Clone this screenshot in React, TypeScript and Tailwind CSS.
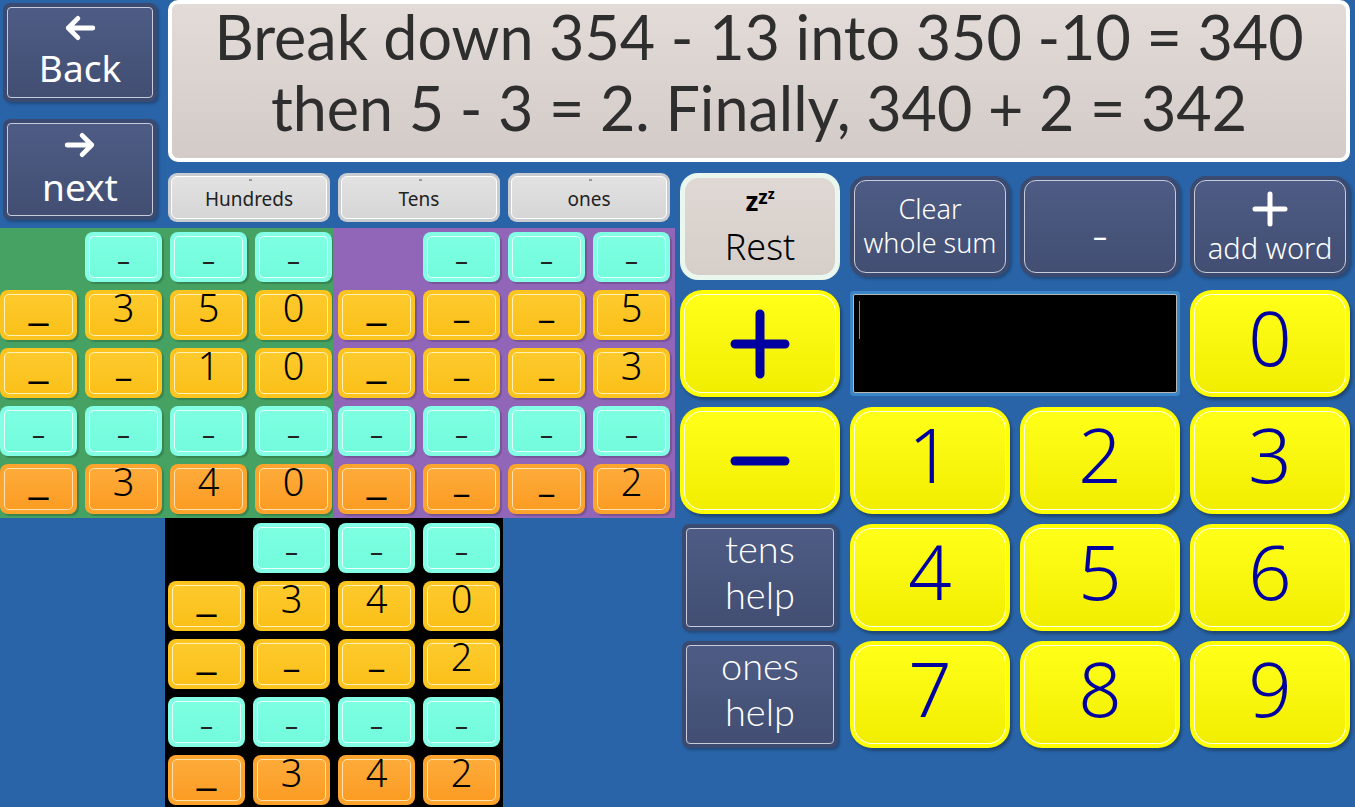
import React from "react";

const FONT = { fontFamily: '"Noto Sans", "Open Sans", sans-serif' };
const LATO = { fontFamily: 'Lato, "Noto Sans", sans-serif' };

type Kind = "cyan" | "yellow" | "orange";
type Row = { kind: Kind; cells: (string | null)[] };

const ringByKind: Record<Kind, string> = {
  cyan: "bg-[#82ffe4]",
  yellow: "bg-[#fcc41f]",
  orange: "bg-[#fca42c]",
};

const fillByKind: Record<Kind, string> = {
  cyan: "bg-gradient-to-b from-[#7effe2] to-[#72fbdc] border-white/80",
  yellow: "bg-gradient-to-b from-[#fdca2c] to-[#fbc018] border-[#fff1b8]",
  orange: "bg-gradient-to-b from-[#fdab3a] to-[#fc9c22] border-[#ffe2b0]",
};

function Tile({ kind, value, first }: { kind: Kind; value: string; first: boolean }) {
  let content: React.ReactNode;
  if (kind === "cyan") {
    content = <span className="text-[26px] leading-[20px] text-[#222] translate-y-[3px]">–</span>;
  } else if (value === "_") {
    content = first ? (
      <span className="text-[36px] leading-[20px] font-bold text-black self-start mt-[2px] scale-x-[1.35]">_</span>
    ) : (
      <span className="text-[34px] leading-[20px] text-black self-start">_</span>
    );
  } else {
    content = <span className="text-[38px] leading-[28px] font-light text-black self-start -mt-[2px]">{value}</span>;
  }
  return (
    <div className={`w-[77px] h-[50px] rounded-[8px] p-[4px] shadow-[2px_2px_1px_rgba(0,0,0,0.18)] ${ringByKind[kind]}`}>
      <div className={`h-full w-full rounded-[5px] border-[1.5px] flex justify-center items-center ${fillByKind[kind]}`}>
        {content}
      </div>
    </div>
  );
}

function Block({ rows, className }: { rows: Row[]; className: string }) {
  return (
    <div className={`flex flex-col gap-[8px] ${className}`}>
      {rows.map((r, i) => (
        <div key={i} className="flex gap-[8px]">
          {r.cells.map((c, j) =>
            c === null ? (
              <div key={j} className="w-[77px] h-[50px]" />
            ) : (
              <Tile key={j} kind={r.kind} value={c} first={j === 0} />
            )
          )}
        </div>
      ))}
    </div>
  );
}

const cyanTop: Row = { kind: "cyan", cells: [null, "-", "-", "-"] };
const cyanAll: Row = { kind: "cyan", cells: ["-", "-", "-", "-"] };

const greenRows: Row[] = [
  cyanTop,
  { kind: "yellow", cells: ["_", "3", "5", "0"] },
  { kind: "yellow", cells: ["_", "_", "1", "0"] },
  cyanAll,
  { kind: "orange", cells: ["_", "3", "4", "0"] },
];

const purpleRows: Row[] = [
  cyanTop,
  { kind: "yellow", cells: ["_", "_", "_", "5"] },
  { kind: "yellow", cells: ["_", "_", "_", "3"] },
  cyanAll,
  { kind: "orange", cells: ["_", "_", "_", "2"] },
];

const blackRows: Row[] = [
  cyanTop,
  { kind: "yellow", cells: ["_", "3", "4", "0"] },
  { kind: "yellow", cells: ["_", "_", "_", "2"] },
  cyanAll,
  { kind: "orange", cells: ["_", "3", "4", "2"] },
];

function SlateButton({
  children,
  className = "",
  round = "big",
}: {
  children: React.ReactNode;
  className?: string;
  round?: "big" | "small";
}) {
  const outer = round === "big" ? "rounded-[16px]" : "rounded-[7px]";
  const inner = round === "big" ? "rounded-[12px]" : "rounded-[4px]";
  return (
    <div className={`bg-[#3a4a70] p-[4px] ${outer} shadow-[2px_2px_3px_rgba(0,0,0,0.25)] ${className}`}>
      <div
        className={`h-full w-full ${inner} border-[1.5px] border-[#c6ccdb] bg-gradient-to-b from-[#4e5c85] to-[#424e72] flex flex-col items-center justify-center text-white`}
      >
        {children}
      </div>
    </div>
  );
}

function PadButton({ children }: { children: React.ReactNode }) {
  return (
    <div className="bg-[#ffff00] p-[4px] rounded-[22px] shadow-[2px_3px_3px_rgba(0,0,0,0.3)]">
      <div className="h-full w-full rounded-[18px] border-[1.5px] border-white/90 bg-gradient-to-b from-[#ffff18] to-[#f2ee00] flex items-center justify-center">
        {children}
      </div>
    </div>
  );
}

function Digit({ d }: { d: string }) {
  return <span className="text-[76px] font-light leading-[80px] text-[#0000a0] -mt-[14px]">{d}</span>;
}

function ArrowLeft() {
  return (
    <svg width="32" height="26" viewBox="0 0 30 24" fill="none" stroke="white" strokeWidth="4.5" strokeLinecap="round" strokeLinejoin="round">
      <path d="M27 12H4M13 3L4 12l9 9" />
    </svg>
  );
}

function ArrowRight() {
  return (
    <svg width="32" height="26" viewBox="0 0 30 24" fill="none" stroke="white" strokeWidth="4.5" strokeLinecap="round" strokeLinejoin="round">
      <path d="M3 12h23M17 3l9 9-9 9" />
    </svg>
  );
}

function HelpLabel({ a }: { a: string }) {
  return (
    <span className="text-[38px] font-light leading-[46px] text-center -mt-[14px]" style={LATO}>
      {a}
      <br />
      help
    </span>
  );
}

export default function App() {
  return (
    <div
      className="w-[1355px] h-[807px] overflow-hidden bg-[#2964a8] grid grid-cols-[165px_510px_680px] grid-rows-[165px_63px_579px]"
      style={FONT}
    >
      {/* nav */}
      <div className="row-span-2 flex flex-col gap-[17px] pl-[3px] pt-[3px]">
        <SlateButton round="small" className="w-[154px] h-[99px]">
          <ArrowLeft />
          <span className="text-[37px] leading-none mt-[8px] mb-[4px]">Back</span>
        </SlateButton>
        <SlateButton round="small" className="w-[154px] h-[101px]">
          <ArrowRight />
          <span className="text-[37px] leading-none mt-[10px] mb-[2px]">next</span>
        </SlateButton>
      </div>

      {/* header */}
      <div className="col-span-2 pl-[3px] pr-[5px]">
        <div
          className="h-[162px] pb-[18px] rounded-[10px] border-[4px] border-white bg-gradient-to-b from-[#e3dbd7] to-[#d3cbc7] flex flex-col items-center justify-center text-[#2e2e2e] text-[61px] leading-[71px]"
          style={LATO}
        >
          <div>Break down 354 - 13 into 350 -10 = 340</div>
          <div>then 5 - 3 = 2. Finally, 340 + 2 = 342</div>
        </div>
      </div>

      {/* right pane */}
      <div className="row-span-2 pl-[5px] pt-[8px] grid grid-cols-[160px_160px_160px_160px] grid-rows-[107px_107px_107px_107px_107px] gap-[10px]">
        <div className="bg-[#eaf7ee] p-[5px] rounded-[18px]">
          <div className="h-full w-full pt-[4px] rounded-[14px] bg-gradient-to-b from-[#e0d8d4] to-[#d6cec9] flex flex-col items-center justify-center text-black">
            <div className="flex items-end h-[22px] font-bold">
              <span className="text-[26px] leading-none">z</span>
              <span className="text-[19px] leading-none mb-[7px]">z</span>
              <span className="text-[14px] leading-none mb-[13px]">z</span>
            </div>
            <span className="text-[36px] font-light leading-none mt-[15px]">Rest</span>
          </div>
        </div>
        <SlateButton className="mt-[3px] mb-[3px]">
          <span className="text-[27px] font-light leading-[34px] text-center -mt-[2px]">
            Clear
            <br />
            whole sum
          </span>
        </SlateButton>
        <SlateButton className="mt-[3px] mb-[3px]">
          <span className="text-[28px] leading-none mt-[16px]">–</span>
        </SlateButton>
        <SlateButton className="mt-[3px] mb-[3px]">
          <svg width="36" height="36" viewBox="0 0 36 36" stroke="white" strokeWidth="5" strokeLinecap="round">
            <path d="M18 3v30M3 18h30" />
          </svg>
          <span className="text-[29px] font-light leading-none mt-[6px]">add word</span>
        </SlateButton>

        <PadButton>
          <svg width="60" height="72" viewBox="0 0 60 72" stroke="#0000a0" strokeWidth="9" strokeLinecap="round">
            <path d="M30 6v60M5 36h50" />
          </svg>
        </PadButton>
        <div className="col-span-2 bg-[#3a86c8] p-[3px] rounded-[4px] my-[1px]">
          <div className="h-full w-full bg-black border border-[#b8b8b8] rounded-[2px] relative">
            <div className="absolute left-[5px] top-[6px] w-[1px] h-[38px] bg-[#888]" />
          </div>
        </div>
        <PadButton>
          <Digit d="0" />
        </PadButton>

        <PadButton>
          <svg width="60" height="20" viewBox="0 0 60 20" stroke="#0000a0" strokeWidth="9" strokeLinecap="round">
            <path d="M5 10h50" />
          </svg>
        </PadButton>
        <PadButton>
          <Digit d="1" />
        </PadButton>
        <PadButton>
          <Digit d="2" />
        </PadButton>
        <PadButton>
          <Digit d="3" />
        </PadButton>

        <SlateButton round="small" className="mx-[2px]">
          <HelpLabel a="tens" />
        </SlateButton>
        <PadButton>
          <Digit d="4" />
        </PadButton>
        <PadButton>
          <Digit d="5" />
        </PadButton>
        <PadButton>
          <Digit d="6" />
        </PadButton>

        <SlateButton round="small" className="mx-[2px]">
          <HelpLabel a="ones" />
        </SlateButton>
        <PadButton>
          <Digit d="7" />
        </PadButton>
        <PadButton>
          <Digit d="8" />
        </PadButton>
        <PadButton>
          <Digit d="9" />
        </PadButton>
      </div>

      {/* column labels */}
      <div className="col-start-2 row-start-2 pl-[3px] pt-[8px] flex gap-[8px]">
        {["Hundreds", "Tens", "ones"].map((l) => (
          <div key={l} className="w-[162px] h-[49px] rounded-[9px] bg-[#c9cdd2] p-[3px]">
            <div className="relative h-full w-full rounded-[6px] border-[1.5px] border-white bg-gradient-to-b from-[#e2e2e2] to-[#d6d6d6] flex items-center justify-center text-[19px] text-[#222]">
              <span className="absolute top-[2px] left-1/2 w-[3px] h-[2px] bg-[#9a9a9a]" />
              <span className="mt-[4px]">{l}</span>
            </div>
          </div>
        ))}
      </div>

      {/* work grid */}
      <div className="col-span-2 row-start-3 flex flex-col">
        <div className="flex">
          <Block rows={greenRows} className="w-[333px] bg-[#45a262] py-[4px]" />
          <Block rows={purpleRows} className="w-[342px] bg-[#9166b8] py-[4px] px-[5px]" />
        </div>
        <Block rows={blackRows} className="ml-[165px] w-[338px] flex-1 bg-black pt-[5px] px-[3px]" />
      </div>
    </div>
  );
}
